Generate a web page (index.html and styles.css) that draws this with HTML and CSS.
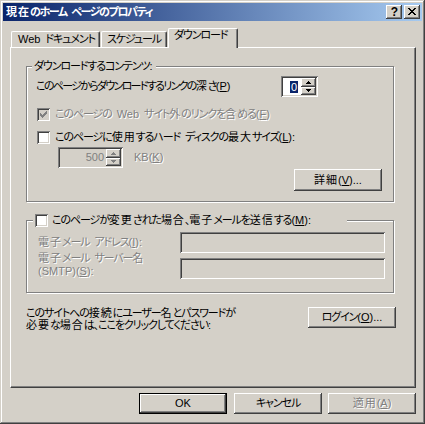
FILE: index.html
```html
<!DOCTYPE html>
<html lang="ja">
<head>
<meta charset="utf-8">
<title>現在のホーム ページのプロパティ</title>
<link rel="stylesheet" href="styles.css">
</head>
<body>
<div class="window">
  <div class="titlebar">
    <span class="title"><span class="k">現在</span>のホーム ページのプロパティ</span>
    <span class="tb-btn help">?</span>
    <span class="tb-btn close"><svg width="8" height="7" viewBox="0 0 8 7"><path d="M0 0h2v1h-2z M6 0h2v1h-2z M1 1h2v1h-2z M5 1h2v1h-2z M2 2h4v1h-4z M3 3h2v1h-2z M2 4h4v1h-4z M1 5h2v1h-2z M5 5h2v1h-2z M0 6h2v1h-2z M6 6h2v1h-2z" fill="#000"/></svg></span>
  </div>
  <div class="client">
    <div class="tabs">
      <div class="tab t1"><span class="l">Web</span> ドキュメント</div>
      <div class="tab t2">スケジュール</div>
      <div class="tab t3 active">ダウンロード</div>
    </div>
    <div class="panel">
      <div class="group g1">
        <div class="legend">ダウンロードするコンテンツ<span class="l">:</span></div>
        <div class="row depth">
          <span class="depth-label">このページからダウンロードするリンクの<span class="k">深</span>さ<span class="l">(<u>P</u>)</span></span>
          <div class="spin s1">
            <span class="spin-val"><span class="sel">0</span></span>
            <span class="spin-btns">
              <span class="sb"><svg width="5" height="3" viewBox="0 0 5 3"><path d="M2 0h1v1h1v1h1v1h-5v-1h1v-1h1z" fill="#000"/></svg></span>
              <span class="sb"><svg width="5" height="3" viewBox="0 0 5 3"><path d="M0 0h5v1h-1v1h-1v1h-1v-1h-1v-1h-1z" fill="#000"/></svg></span>
            </span>
          </div>
        </div>
        <div class="check disabled c1">
          <span class="box checked"><svg width="13" height="13" viewBox="0 0 13 13"><path d="M3 5h1v1h1v1h1v-1h1v-1h1v-1h1v-1h1v3h-1v1h-1v1h-1v1h-1v1h-1v-1h-1v-1h-1z" fill="#808080"/></svg></span>
          <span class="check-text">このページの <span class="l">Web</span> サイト<span class="k">外</span>のリンクを<span class="k">含</span>める<span class="l">(<u>F</u>)</span></span>
        </div>
        <div class="check c2">
          <span class="box"></span>
          <span class="check-text">このページに<span class="k">使用</span>するハード ディスクの<span class="k">最大</span>サイズ<span class="l">(<u>L</u>):</span></span>
        </div>
        <div class="row size">
          <div class="spin s2">
            <span class="spin-val">500</span>
            <span class="spin-btns">
              <span class="sb"><svg width="5" height="3" viewBox="0 0 5 3"><path d="M2 0h1v1h1v1h1v1h-5v-1h1v-1h1z" fill="#808080"/></svg></span>
              <span class="sb"><svg width="5" height="3" viewBox="0 0 5 3"><path d="M0 0h5v1h-1v1h-1v1h-1v-1h-1v-1h-1z" fill="#808080"/></svg></span>
            </span>
          </div>
          <span class="kb dis-text l">KB(<u>K</u>)</span>
        </div>
        <div class="row btn-row">
          <span class="btn detail"><span class="k">詳細</span><span class="l">(<u>V</u>)...</span></span>
        </div>
      </div>
      <div class="group g2">
        <div class="legend legend-check">
          <span class="box"></span>
          <span class="check-text">このページが<span class="k">変更</span>された<span class="k">場合</span>、<span class="k">電子</span>メールを<span class="k">送信</span>する<span class="l">(<u>M</u>):</span></span>
        </div>
        <div class="field-row f1">
          <span class="field-label dis-text"><span class="k">電子</span>メール アドレス<span class="l">(<u>I</u>):</span></span>
          <span class="field"></span>
        </div>
        <div class="field-row f2">
          <span class="field-label dis-text two"><span class="k">電子</span>メール サーバー<span class="k">名</span><br><span class="l">(SMTP)(<u>S</u>):</span></span>
          <span class="field"></span>
        </div>
      </div>
      <div class="login-row">
        <p class="login-text">このサイトへの<span class="k">接続</span>にユーザー<span class="k">名</span>とパスワードが<br><span class="k">必要</span>な<span class="k">場合</span>は、ここをクリックしてください<span class="l">:</span></p>
        <span class="btn login">ログイン<span class="l">(<u>O</u>)...</span></span>
      </div>
    </div>
    <div class="buttons">
      <span class="btn default l">OK</span>
      <span class="btn">キャンセル</span>
      <span class="btn dis-btn"><span class="dis-text"><span class="k">適用</span><span class="l">(<u>A</u>)</span></span></span>
    </div>
  </div>
</div>
</body>
</html>
```
FILE: styles.css
```css
* { box-sizing: border-box; }
html, body { margin: 0; padding: 0; }
body {
  width: 425px;
  height: 424px;
  overflow: hidden;
  background: #d4d0c8;
  font-family: "Liberation Sans", "Noto Sans CJK JP", sans-serif;
  font-size: 11px;
  line-height: 13px;
  letter-spacing: -1.1px;
  word-spacing: 3px;
  color: #000;
  font-feature-settings: "palt";
}
.k { letter-spacing: 1px; }
.l { letter-spacing: 0; }
u { text-decoration: underline; text-underline-offset: 1px; }

.window {
  width: 425px;
  height: 424px;
  padding: 3px;
  background: #d4d0c8;
  box-shadow: inset -1px -1px #404040, inset 1px 1px #d4d0c8, inset -2px -2px #808080, inset 2px 2px #fff;
  display: flex;
  flex-direction: column;
}

.titlebar {
  height: 18px;
  flex: 0 0 18px;
  background: linear-gradient(to right, #0a246a, #a6caf0);
  display: flex;
  align-items: center;
  padding: 0 2px 0 2px;
}
.title {
  flex: 1;
  color: #fff;
  font-weight: bold;
  padding-left: 1px;
  white-space: nowrap;
  letter-spacing: -1.4px;
}
.title .k { letter-spacing: 1px; }
.tb-btn {
  width: 16px;
  height: 14px;
  background: #d4d0c8;
  box-shadow: inset -1px -1px #404040, inset 1px 1px #fff, inset -2px -2px #808080;
  display: flex;
  align-items: center;
  justify-content: center;
  font-family: "Liberation Sans", sans-serif;
  font-weight: bold;
  font-size: 12px;
  line-height: 12px;
  letter-spacing: 0;
}
.tb-btn + .tb-btn { margin-left: 2px; }
.tb-btn.help { padding: 0 0 1px 1px; }
.tb-btn.close svg { display: block; margin: 0 0 1px 0; }

.client {
  flex: 1;
  display: flex;
  flex-direction: column;
  padding-top: 7px;
}

.tabs {
  display: flex;
  align-items: flex-end;
  height: 19px;
  margin-left: 8px;
}
.tab {
  height: 16px;
  background: #d4d0c8;
  border-top: 1px solid #fff;
  border-left: 1px solid #fff;
  border-right: 1px solid #404040;
  border-top-left-radius: 2px;
  border-top-right-radius: 2px;
  box-shadow: inset -1px 0 #808080;
  padding: 1px 0 0 6px;
  white-space: nowrap;
  margin-right: 1px;
}
.t1 { width: 89px; }
.t2 { width: 66px; padding-left: 5px; }
.t3 { width: 70px; }
.tab.active {
  height: 20px;
  margin-bottom: -1px;
  padding: 0 0 0 5px;
  position: relative;
  z-index: 1;
}

.panel {
  margin-left: 7px;
  width: 406px;
  height: 341px;
  flex: 0 0 341px;
  border-left: 1px solid #fff;
  border-top: 1px solid #fff;
  border-right: 1px solid #404040;
  border-bottom: 1px solid #404040;
  box-shadow: inset -1px -1px #808080;
  padding: 18px 0 0 15px;
  display: flex;
  flex-direction: column;
}

.group {
  width: 368px;
  border: 1px solid #808080;
  box-shadow: inset 1px 1px #fff, 1px 1px #fff;
  display: flex;
  flex-direction: column;
  padding: 0 0 10px 9px;
}
.legend {
  margin-top: -7px;
  margin-left: -4px;
  align-self: flex-start;
  background: #d4d0c8;
  padding: 0 3px 0 2px;
  height: 13px;
  white-space: nowrap;
}

.row { display: flex; align-items: center; }
.depth { margin-top: 3px; height: 21px; }
.depth-label { width: 245px; white-space: nowrap; letter-spacing: -1.7px; }
.depth-label .k { letter-spacing: 1px; }
.depth-label .l { letter-spacing: 0; }

.spin {
  height: 21px;
  display: flex;
  padding: 2px;
  background: #fff;
  box-shadow: inset 1px 1px #808080, inset -1px -1px #fff, inset 2px 2px #404040, inset -2px -2px #d4d0c8;
}
.s1 { width: 37px; }
.s2 { width: 65px; background: #d4d0c8; margin-left: 22px; }
.spin-val {
  flex: 1;
  display: flex;
  align-items: center;
  justify-content: flex-end;
  padding-right: 3px;
  letter-spacing: 0;
}
.s2 .spin-val { color: #808080; padding-right: 2px; }
.sel {
  background: #0a246a;
  color: #fff;
  padding: 0 1px;
  line-height: 12px;
}
.spin-btns {
  width: 15px;
  display: flex;
  flex-direction: column;
}
.sb {
  flex: 1;
  background: #d4d0c8;
  box-shadow: inset -1px -1px #404040, inset 1px 1px #fff, inset -2px -2px #808080;
  display: flex;
  align-items: center;
  justify-content: center;
}
.sb svg { display: block; }

.check { display: flex; align-items: center; height: 13px; }
.c1 { margin-top: 11px; }
.c2 { margin-top: 10px; }
.box {
  width: 13px;
  height: 13px;
  flex: 0 0 13px;
  background: #fff;
  box-shadow: inset 1px 1px #808080, inset -1px -1px #fff, inset 2px 2px #404040, inset -2px -2px #d4d0c8;
  margin-left: 1px;
}
.box svg { display: block; }
.check.disabled .box { background: #d4d0c8; }
.check-text { margin-left: 5px; white-space: nowrap; }
.check.disabled .check-text,
.dis-text {
  color: #808080;
  text-shadow: 1px 1px 0 #fff;
}

.size { margin-top: 3px; height: 21px; }
.kb { margin-left: 11px; }

.btn {
  width: 88px;
  height: 22px;
  background: #d4d0c8;
  box-shadow: inset -1px -1px #404040, inset 1px 1px #fff, inset -2px -2px #808080;
  display: flex;
  align-items: center;
  justify-content: center;
  white-space: nowrap;
}
.btn-row { margin-top: 1px; }
.detail { margin-left: 258px; }

.g2 { margin-top: 18px; padding: 0 0 13px 11px; }
.legend-check {
  margin-left: -5px;
  width: 314px;
  display: flex;
  align-items: center;
  padding-left: 2px;
}
.legend-check .box { margin-left: 0; }
.legend-check .check-text { margin-left: 4px; }

.field-row { display: flex; align-items: center; margin-top: 5px; height: 21px; }
.field-label { width: 142px; white-space: nowrap; }
.field-label.two { line-height: 13px; align-self: flex-start; margin-top: -6px; }
.field {
  width: 205px;
  height: 21px;
  background: #d4d0c8;
  box-shadow: inset 1px 1px #808080, inset -1px -1px #fff, inset 2px 2px #404040, inset -2px -2px #d4d0c8;
}

.login-row {
  display: flex;
  align-items: center;
  margin-top: 11px;
  width: 370px;
}
.login-text {
  margin: 0;
  flex: 1;
  line-height: 12px;
  padding-top: 3px;
  white-space: nowrap;
}
.login { height: 21px; }

.buttons {
  display: flex;
  justify-content: flex-end;
  margin-top: 5px;
  padding-right: 6px;
  gap: 6px;
}
.buttons .btn { height: 21px; }
.buttons .default {
  box-shadow: inset 0 0 0 1px #000, inset -2px -2px #404040, inset 2px 2px #fff, inset -3px -3px #808080;
  margin-right: 1px;
}
```
